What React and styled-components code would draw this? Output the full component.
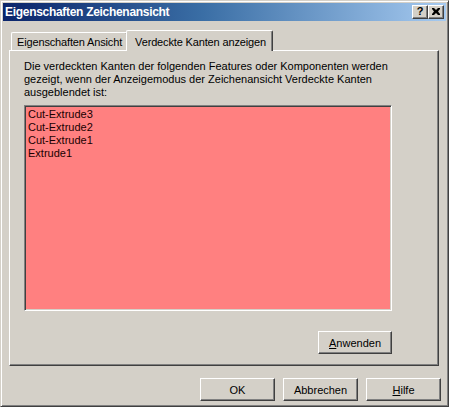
import React from "react";
import styled, { createGlobalStyle } from "styled-components";

const GlobalStyle = createGlobalStyle`
  html, body { margin: 0; padding: 0; background: #d4d0c8; }
  body { font-family: "Liberation Sans", Arial, sans-serif; }
  * { box-sizing: border-box; }
`;

const Window = styled.div`
  width: 449px;
  height: 407px;
  background: #d4d0c8;
  border: 1px solid;
  border-color: #d4d0c8 #404040 #404040 #d4d0c8;
  box-shadow: inset 1px 1px #ffffff, inset -1px -1px #808080;
  padding: 2px;
  display: flex;
  flex-direction: column;
  font-family: "Liberation Sans", Arial, sans-serif;
  font-size: 11px;
  color: #000;
`;

const TitleBar = styled.div`
  height: 18px;
  flex: none;
  display: flex;
  align-items: center;
  padding: 0 2px 0 2px;
  background: linear-gradient(to right, #0a246a 0%, #3a6ea5 45%, #a6caf0 100%);
`;

const Title = styled.div`
  flex: 1;
  color: #fff;
  font-weight: bold;
  font-size: 12px;
  letter-spacing: -0.3px;
  white-space: nowrap;
`;

const CaptionButtons = styled.div`
  display: flex;
`;

const CaptionButton = styled.div`
  width: 16px;
  height: 14px;
  background: #d4d0c8;
  border: 1px solid;
  border-color: #ffffff #404040 #404040 #ffffff;
  box-shadow: inset -1px -1px #808080;
  display: flex;
  align-items: center;
  justify-content: center;
  font-weight: bold;
  font-size: 11px;
  line-height: 1;
  color: #000;
  padding-bottom: 1px;
`;

const Body = styled.div`
  flex: none;
  display: flex;
  flex-direction: column;
  padding: 9px 7px 0 6px;
`;

const TabStrip = styled.div`
  height: 20px;
  display: flex;
  align-items: flex-end;
  padding-left: 2px;
`;

const Tab = styled.div`
  height: ${(p) => (p.$active ? "21px" : "18px")};
  margin: ${(p) => (p.$active ? "0 -2px -1px -2px" : "0")};
  position: relative;
  z-index: ${(p) => (p.$active ? 2 : 1)};
  padding: ${(p) => (p.$active ? "2px 6px 0 8px" : "1px 5px 0 5px")};
  background: #d4d0c8;
  border-top: 1px solid #ffffff;
  border-left: 1px solid #ffffff;
  border-right: 1px solid #404040;
  border-radius: 2px 2px 0 0;
  box-shadow: inset -1px 0 #808080;
  display: flex;
  align-items: center;
  white-space: nowrap;
  font-size: 11px;
  letter-spacing: -0.15px;
`;

const Panel = styled.div`
  height: 316px;
  background: #d4d0c8;
  border: 1px solid;
  border-color: #ffffff #404040 #404040 #ffffff;
  box-shadow: inset -1px -1px #808080;
  padding: 9px 0 0 14px;
  display: flex;
  flex-direction: column;
  align-items: flex-start;
`;

const Description = styled.p`
  margin: 0;
  width: 372px;
  line-height: 13px;
  font-size: 11px;
`;

const ListBox = styled.div`
  margin-top: 6px;
  width: 368px;
  height: 206px;
  background: #ff8080;
  border: 1px solid;
  border-color: #808080 #ffffff #ffffff #808080;
  box-shadow: inset 1px 1px #404040, inset -1px -1px #d4d0c8;
  padding: 2px 3px;
  display: flex;
  flex-direction: column;
`;

const ListItem = styled.div`
  line-height: 13px;
  font-size: 11px;
  color: #1a0000;
`;

const Button = styled.button`
  width: ${(p) => p.$width || "75px"};
  height: 23px;
  background: #d4d0c8;
  border: 1px solid;
  border-color: #ffffff #404040 #404040 #ffffff;
  box-shadow: inset -1px -1px #808080;
  font-family: "Liberation Sans", Arial, sans-serif;
  font-size: 11px;
  color: #000;
  padding: 0;
  display: flex;
  align-items: center;
  justify-content: center;
`;

const ApplyButton = styled(Button)`
  margin-top: 20px;
  align-self: flex-end;
  margin-right: 46px;
`;

const Footer = styled.div`
  display: flex;
  justify-content: flex-end;
  gap: 8px;
  margin-top: 12px;
  padding-right: 5px;
`;

const Key = styled.span`
  text-decoration: underline;
`;

export default function App() {
  return (
    <>
      <GlobalStyle />
      <Window>
        <TitleBar>
          <Title>Eigenschaften Zeichenansicht</Title>
          <CaptionButtons>
            <CaptionButton>?</CaptionButton>
            <CaptionButton>
              <svg width="8" height="7" viewBox="0 0 8 7">
                <path
                  d="M0 0h2l2 2 2-2h2v1L6 3.5 8 6v1H6L4 5 2 7H0V6l2-2.5L0 1z"
                  fill="#000"
                />
              </svg>
            </CaptionButton>
          </CaptionButtons>
        </TitleBar>
        <Body>
          <TabStrip>
            <Tab>Eigenschaften Ansicht</Tab>
            <Tab $active>Verdeckte Kanten anzeigen</Tab>
          </TabStrip>
          <Panel>
            <Description>
              Die verdeckten Kanten der folgenden Features oder Komponenten werden
              gezeigt, wenn der Anzeigemodus der Zeichenansicht Verdeckte Kanten
              ausgeblendet ist:
            </Description>
            <ListBox>
              <ListItem>Cut-Extrude3</ListItem>
              <ListItem>Cut-Extrude2</ListItem>
              <ListItem>Cut-Extrude1</ListItem>
              <ListItem>Extrude1</ListItem>
            </ListBox>
            <ApplyButton $width="74px">
              <Key>A</Key>nwenden
            </ApplyButton>
          </Panel>
        </Body>
        <Footer>
          <Button>OK</Button>
          <Button>Abbrechen</Button>
          <Button>
            <Key>H</Key>ilfe
          </Button>
        </Footer>
      </Window>
    </>
  );
}
